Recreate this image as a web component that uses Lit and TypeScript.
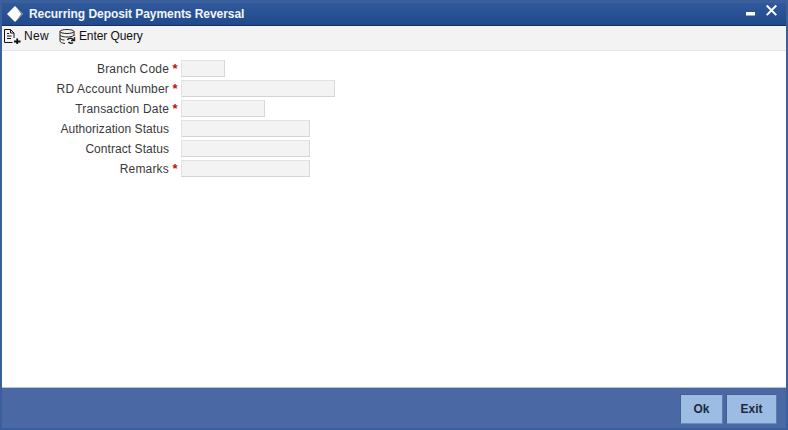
import { LitElement, html, css } from "lit";
import { customElement } from "lit/decorators.js";

const rows = [
  { label: "Branch Code", req: true, w: 44 },
  { label: "RD Account Number", req: true, w: 154 },
  { label: "Transaction Date", req: true, w: 84 },
  { label: "Authorization Status", req: false, w: 129 },
  { label: "Contract Status", req: false, w: 129 },
  { label: "Remarks", req: true, w: 129 },
];

@customElement("app-root")
export class AppRoot extends LitElement {
  static styles = css`
    :host { display: block; width: 788px; height: 430px; font-family: "Liberation Sans", Arial, sans-serif; }
    .win { width: 788px; height: 430px; box-sizing: border-box; display: flex; flex-direction: column; background: #3b5e9c; padding: 3px 2px 2px 2px; }
    .title { height: 23px; flex: none; box-sizing: border-box; display: flex; align-items: center; background: linear-gradient(#30599b, #204a8c); border-bottom: 1px solid #16305f; color: #f2f5fa; font-weight: bold; font-size: 12px; letter-spacing: -0.06px; padding-left: 5px; }
    .logo { margin-right: 5px; flex: none; }
    .t { flex: 1; }
    .ctl { display: flex; align-items: flex-start; gap: 11px; margin-right: 9px; height: 100%; }
    .toolbar { height: 25px; flex: none; display: flex; align-items: center; background: #f3f3f3; border-bottom: 1px solid #e6e6e6; font-size: 12px; color: #111; box-sizing: border-box; padding: 0 0 4px 2px; }
    .tb { display: flex; align-items: center; gap: 3px; }
    .tb + .tb { margin-left: 10px; }
    .new { letter-spacing: 0.3px; }
    .query { letter-spacing: -0.08px; }
    .content { flex: 1; background: #fff; display: flex; flex-direction: column; gap: 3px; padding-top: 9px; box-sizing: border-box; }
    .row { display: flex; align-items: center; height: 17px; font-size: 12px; color: #3a3a3a; }
    .lab { width: 167px; text-align: right; flex: none; white-space: nowrap; letter-spacing: 0.06px; }
    .lab.req { letter-spacing: 0.18px; }
    .star { width: 12px; flex: none; color: #c01010; font-weight: bold; text-align: center; font-size: 13px; }
    .inp { height: 17px; box-sizing: border-box; background: #f3f3f3; border: 1px solid #e2e2e2; border-right-color: #d8d8d8; border-bottom-color: #d4d4d4; }
    .footer { height: 41px; flex: none; box-sizing: border-box; background: #4a69a4; border-top: 1px solid #b4c2da; display: flex; justify-content: flex-end; align-items: flex-start; gap: 3px; padding: 6px 9px 0 0; }
    .btn { height: 30px; box-sizing: border-box; background: #9dbce4; border: 1px solid #41618f; border-right-color: #5a7cb0; border-bottom-color: #6b8bbd; font-size: 12px; font-weight: bold; color: #1c2a3a; display: flex; align-items: center; justify-content: center; }
    .ok { width: 43px; }
    .exit { width: 51px; }
  `;

  render() {
    return html`<div class="win">
      <div class="title">
        <svg class="logo" width="17" height="16" viewBox="0 0 17 16"><path d="M8 0l8 8-8 8-8-8z" fill="#fff"/><path d="M10 2l6 6-6 6 4-6z" fill="#16305f" opacity=".6"/></svg>
        <span class="t">Recurring Deposit Payments Reversal</span>
        <div class="ctl">
          <svg width="9" height="16" viewBox="0 0 9 16"><rect x="0" y="9" width="9" height="3.500" fill="#fff"/></svg>
          <svg width="11" height="13" viewBox="0 0 11 13"><path d="M.7 2.500l9.600 9.600M10.300 2.500L.7 12.100" stroke="#fff" stroke-width="2"/></svg>
        </div>
      </div>
      <div class="toolbar">
        <div class="tb">
          <svg width="17" height="15" viewBox="0 0 17 15" fill="none" stroke="#111"><path d="M.5 13.500V.5h6l3.500 3.500v5M6.500.5v3.500H10M.5 13.500h8M3 4.500h2M3 7h4.500M3 9.500h4"/><path d="M10 12.500h6.500M13.200 9.500v5.500" stroke-width="1.800"/></svg>
          <span class="new">New</span>
        </div>
        <div class="tb">
          <svg width="17" height="15" viewBox="0 0 17 15" fill="none" stroke="#222"><ellipse cx="8" cy="2.500" rx="7" ry="2"/><path d="M1 2.500v9.500c0 1.200 2.500 2.300 5 2.500M15 2.500v4.500M1 5.800c0 1.200 3 2.200 7 2.200s7-1 7-2.200M1 9c0 1.100 2 2 4.500 2.100"/><path d="M8.500 11c.7-2 4.500-2.500 6 0M15.500 8v3.500H12M9.500 13c1 1.500 3.500 1.500 4.500.5" stroke="#222" stroke-width="1.400"/></svg>
          <span class="query">Enter Query</span>
        </div>
      </div>
      <div class="content">
        ${rows.map(
          (r) => html`<div class="row">
            <span class="lab ${r.req ? "req" : ""}">${r.label}</span>
            <span class="star">${r.req ? "*" : ""}</span>
            <div class="inp" style="width:${r.w}px"></div>
          </div>`
        )}
      </div>
      <div class="footer">
        <div class="btn ok">Ok</div>
        <div class="btn exit">Exit</div>
      </div>
    </div>`;
  }
}
